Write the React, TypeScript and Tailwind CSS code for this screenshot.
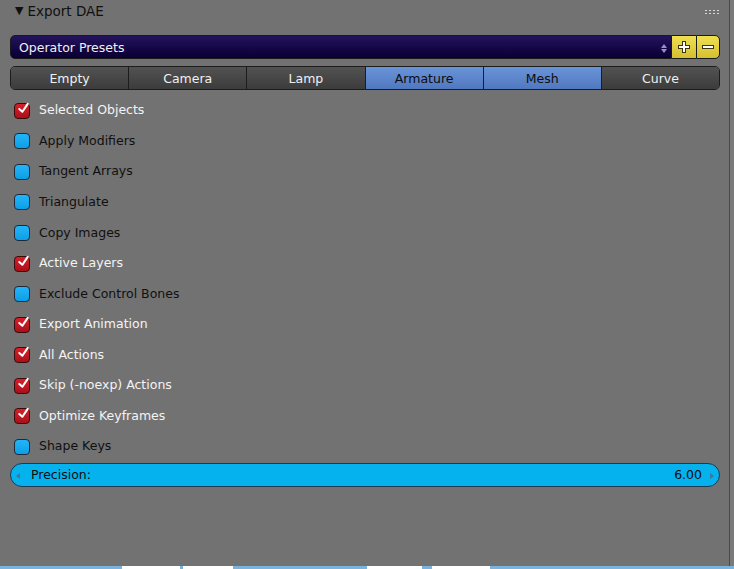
import { Fragment } from 'react';

interface Option {
  label: string;
  checked: boolean;
}

const OPTIONS: Option[] = [
  { label: 'Selected Objects', checked: true },
  { label: 'Apply Modifiers', checked: false },
  { label: 'Tangent Arrays', checked: false },
  { label: 'Triangulate', checked: false },
  { label: 'Copy Images', checked: false },
  { label: 'Active Layers', checked: true },
  { label: 'Exclude Control Bones', checked: false },
  { label: 'Export Animation', checked: true },
  { label: 'All Actions', checked: true },
  { label: 'Skip (-noexp) Actions', checked: true },
  { label: 'Optimize Keyframes', checked: true },
  { label: 'Shape Keys', checked: false },
];

const TABS = [
  { label: 'Empty', active: false },
  { label: 'Camera', active: false },
  { label: 'Lamp', active: false },
  { label: 'Armature', active: true },
  { label: 'Mesh', active: true },
  { label: 'Curve', active: false },
];

const CheckBox = ({ checked }: { checked: boolean }) =>
  checked ? (
    <div className="relative h-4 w-4 rounded-[4px] border border-[#3a0a0a] bg-gradient-to-b from-[#d8202a] to-[#a8101a]">
      <svg className="absolute -top-[3px] left-[1px]" width="15" height="15" viewBox="0 0 16 16">
        <path d="M3.5 8.5 L6.8 11.5 L12.5 3" fill="none" stroke="#ffffff" strokeWidth="2.2" strokeLinecap="round" strokeLinejoin="round" />
      </svg>
    </div>
  ) : (
    <div className="h-4 w-4 rounded-[4px] border border-[#1d2a38] bg-gradient-to-b from-[#22b4f8] to-[#0c9fe6]" />
  );

const App = () => {
  return (
    <div
      className="flex h-[569px] w-[734px] flex-col bg-[#727272] text-[12.5px]"
      style={{ fontFamily: '"DejaVu Sans", sans-serif' }}
    >
      <div className="flex flex-1">
        <div className="flex w-[729px] flex-col pl-[10px] pr-[9px]">
          {/* header */}
          <div className="flex h-[23px] items-center text-[#101010]">
            <span className="ml-[5px] text-[11px]">▼</span>
            <span className="ml-[4px] text-[13.5px]">Export DAE</span>
            <div className="ml-auto mr-[1px] grid grid-cols-4 gap-x-[2px] gap-y-[2px]">
              {Array.from({ length: 8 }).map((_, i) => (
                <div key={i} className="h-[1px] w-[2px] bg-[#d8d8d8]" />
              ))}
            </div>
          </div>

          {/* operator presets */}
          <div className="mt-[12px] flex h-[24px]">
            <div className="flex flex-1 items-center rounded-l-[5px] border border-[#1a1a1a] bg-gradient-to-b from-[#24145e] to-[#0a0032] pl-[8px] pr-[4px] pt-[2px] text-[#f0f0f0]">
              <span>Operator Presets</span>
              <div className="ml-auto flex flex-col items-center gap-[1px]">
                <div className="h-0 w-0 border-x-[3px] border-b-[4px] border-x-transparent border-b-[#9a8ad8]" />
                <div className="h-0 w-0 border-x-[3px] border-t-[4px] border-x-transparent border-t-[#9a8ad8]" />
              </div>
            </div>
            <div className="flex w-[24px] items-center justify-center border-y border-[#1a1a1a] bg-gradient-to-b from-[#f0e050] to-[#d4c030]">
              <svg width="16" height="16" viewBox="0 0 16 16">
                <path d="M8 2 V14 M2 8 H14" stroke="#3a3410" strokeWidth="4" />
                <path d="M8 3 V13 M3 8 H13" stroke="#ffffff" strokeWidth="2" />
              </svg>
            </div>
            <div className="flex w-[24px] items-center justify-center rounded-r-[5px] border border-[#1a1a1a] bg-gradient-to-b from-[#f0e050] to-[#d4c030]">
              <svg width="16" height="16" viewBox="0 0 16 16">
                <path d="M2 8 H14" stroke="#3a3410" strokeWidth="4" />
                <path d="M3 8 H13" stroke="#ffffff" strokeWidth="2" />
              </svg>
            </div>
          </div>

          {/* tabs */}
          <div className="mt-[7px] flex h-[24px] overflow-hidden rounded-[5px] border border-[#1c1c1c]">
            {TABS.map((tab, i) => (
              <Fragment key={tab.label}>
                {i > 0 && <div className="w-[1px] bg-[#1c1c1c]" />}
                <div
                  className={
                    tab.active
                      ? 'flex flex-1 items-center justify-center bg-gradient-to-b from-[#6a94d8] to-[#5078c0] pt-[2px] text-[#0c0c0c]'
                      : 'flex flex-1 items-center justify-center bg-gradient-to-b from-[#525252] to-[#3c3c3c] pt-[2px] text-[#f0f0f0]'
                  }
                >
                  {tab.label}
                </div>
              </Fragment>
            ))}
          </div>

          {/* options */}
          <div className="mt-[5px] flex flex-col">
            {OPTIONS.map((o) => (
              <div key={o.label} className="flex h-[30.55px] items-center pl-[4px] pt-[1px]">
                <CheckBox checked={o.checked} />
                <span className={o.checked ? 'ml-[9px] text-[#f4f4f4]' : 'ml-[9px] text-[#101010]'}>
                  {o.label}
                </span>
              </div>
            ))}
          </div>

          {/* precision */}
          <div className="mt-[1px] flex h-[24px] items-center rounded-full border border-[#1e3a50] bg-[#06b2ee] px-[5px] pt-[2px] text-[#0c0c0c]">
            <div className="h-0 w-0 border-y-[3px] border-r-[4px] border-y-transparent border-r-[#3c7898]" />
            <span className="ml-[11px]">Precision:</span>
            <span className="ml-auto mr-[8px]">6.00</span>
            <div className="h-0 w-0 border-y-[3px] border-l-[4px] border-y-transparent border-l-[#3c7898]" />
          </div>
        </div>
        <div className="w-[1px] bg-[#4a4a4a]" />
        <div className="flex-1 bg-[#7a7a7a]" />
      </div>

      {/* taskbar strip */}
      <div className="flex h-[3px] bg-[#7ab4dc]">
        <div className="ml-[122px] w-[58px] bg-white" />
        <div className="ml-[3px] w-[50px] bg-white" />
        <div className="ml-[134px] w-[55px] bg-white" />
        <div className="ml-[10px] w-[58px] bg-white" />
      </div>
    </div>
  );
};

export default App;
